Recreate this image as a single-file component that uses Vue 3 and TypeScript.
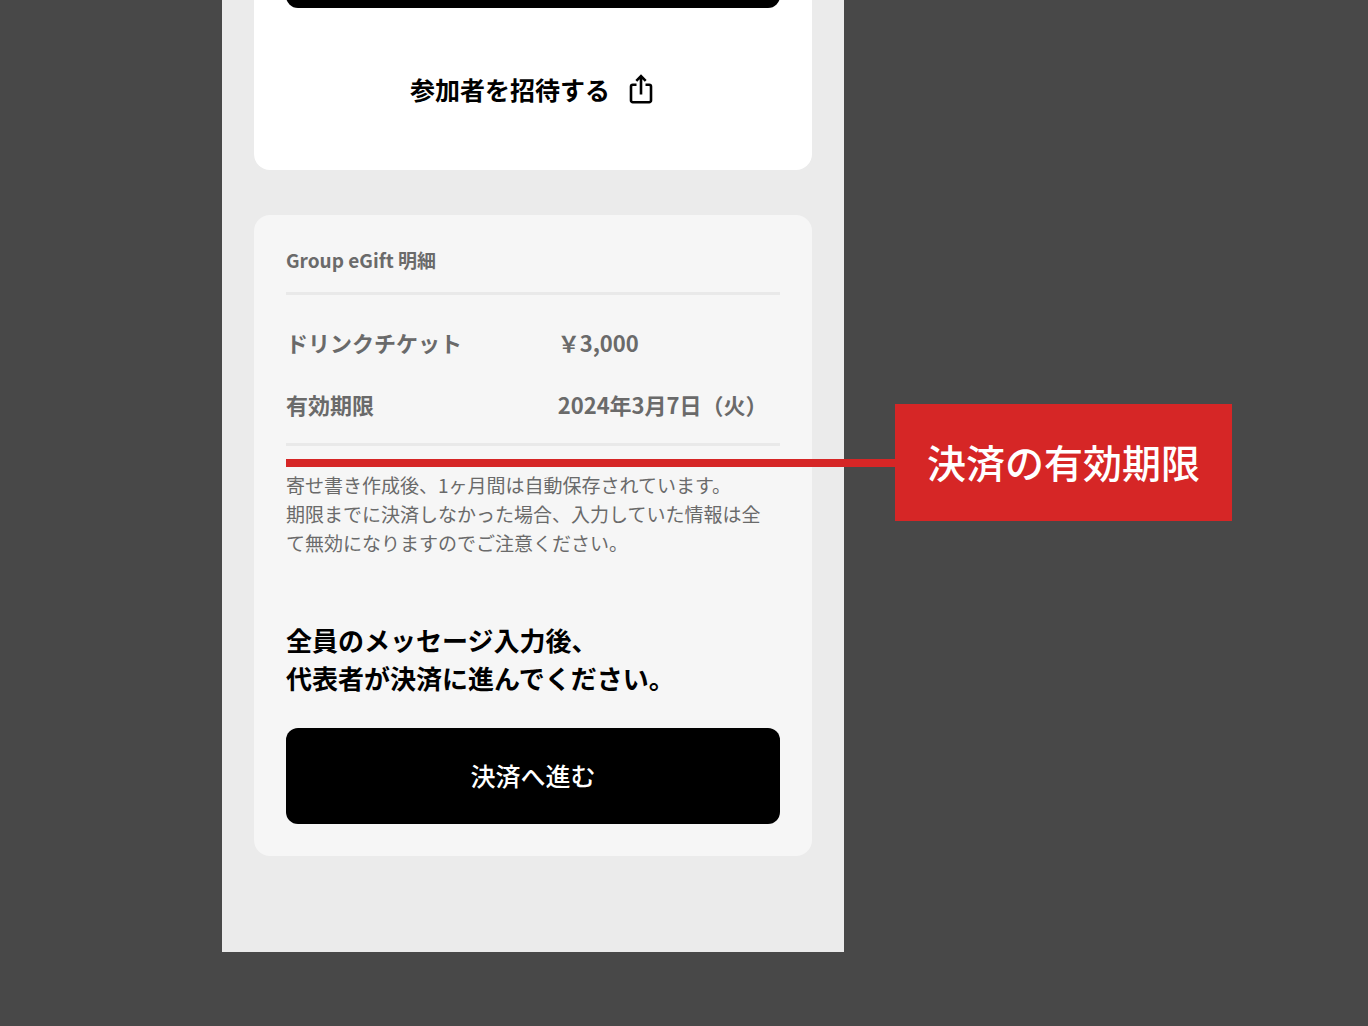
<script setup lang="ts">
interface Row {
  label: string
  value: string
}

const rows: Row[] = [
  { label: 'ドリンクチケット', value: '￥3,000' },
  { label: '有効期限', value: '2024年3月7日（火）' },
]
</script>

<template>
  <div class="stage">
    <main class="phone">
      <section class="card invite">
        <button class="primary scrolled" type="button" aria-label="メッセージ入力"></button>
        <button class="share" type="button">
          <span>参加者を招待する</span>
          <svg width="26" height="32" viewBox="0 0 26 32" fill="none" stroke="#000" stroke-width="2.6" aria-hidden="true">
            <path d="M8.500 11.800H4.800a1.800 1.800 0 0 0-1.800 1.800V27.400a1.800 1.800 0 0 0 1.800 1.800h16.400a1.800 1.800 0 0 0 1.800-1.800V13.600a1.800 1.800 0 0 0-1.800-1.800H17.500" />
            <path d="M13 21.500V4M8.300 7.900 13 3.200l4.700 4.700" />
          </svg>
        </button>
      </section>

      <section class="card detail">
        <h2>Group eGift 明細</h2>
        <dl>
          <div v-for="row in rows" :key="row.label" class="row">
            <dt>{{ row.label }}</dt>
            <dd>{{ row.value }}</dd>
          </div>
        </dl>
        <div class="noteblock">
          <p class="note">寄せ書き作成後、1ヶ月間は自動保存されています。<br />期限までに決済しなかった場合、入力していた情報は全て無効になりますのでご注意ください。</p>
          <div class="callout">
            <span class="line"></span>
            <strong>決済の有効期限</strong>
          </div>
        </div>
        <p class="lead">全員のメッセージ入力後、<br />代表者が決済に進んでください。</p>
        <button class="primary" type="button">決済へ進む</button>
      </section>
    </main>
  </div>
</template>

<style>
body {
  background: #484848;
}
</style>

<style scoped>
.stage {
  box-sizing: border-box;
  min-height: 100vh;
  padding: 0 16px 74px 222px;
  overflow: hidden;
  background: #484848;
  font-family: "Noto Sans CJK JP", sans-serif;
  font-weight: 700;
}

.phone {
  box-sizing: border-box;
  max-width: 622px;
  padding: 0 32px 96px;
  background: #ebebeb;
}

.card {
  padding: 32px;
  border-radius: 16px;
  background: #f6f6f6;
}

.invite {
  overflow: hidden;
  padding-top: 0;
  padding-bottom: 47px;
  border-radius: 0 0 16px 16px;
  background: #fff;
}

.primary {
  display: block;
  width: 100%;
  height: 96px;
  padding: 0 0 2px;
  border: 0;
  border-radius: 12px;
  background: #000;
  color: #fff;
  font: inherit;
  font-size: 25px;
  font-weight: 500;
}

.scrolled {
  margin-top: -88px;
}

.share {
  display: flex;
  align-items: center;
  justify-content: center;
  gap: 18px;
  width: 100%;
  height: 68px;
  margin-top: 47px;
  padding: 0 2px 0 0;
  border: 0;
  background: none;
  color: #000;
  font: inherit;
  font-size: 25px;
}

.detail {
  margin-top: 45px;
}

h2 {
  margin: 0;
  padding-bottom: 19px;
  border-bottom: 3px solid #e9e9e9;
  color: #6a6a6a;
  font-size: 19px;
  line-height: 26px;
}

dl {
  margin: 0;
  padding: 31px 0 23px;
  border-bottom: 3px solid #e9e9e9;
  color: #6a6a6a;
  font-size: 22px;
  line-height: 32px;
}

.row {
  display: flex;
}

.row + .row {
  margin-top: 30px;
}

dt {
  width: 55%;
}

dd {
  margin: 0;
  white-space: nowrap;
}

.noteblock {
  position: relative;
  padding-top: 24px;
}

.note {
  margin: 0;
  padding-right: 12px;
  color: #6a6a6a;
  font-size: 19px;
  font-weight: 400;
  line-height: 29px;
}

.callout {
  position: absolute;
  top: -42px;
  left: 0;
  display: flex;
  align-items: center;
}

.line {
  width: 609px;
  height: 8px;
  background: #d62626;
}

.callout strong {
  padding: 29px 32px 31px;
  background: #d62626;
  color: #fff;
  font-size: 39px;
  font-weight: 500;
  line-height: 57px;
  white-space: nowrap;
}

.lead {
  margin: 64px 0 31px;
  font-size: 26px;
  line-height: 38px;
}
</style>
